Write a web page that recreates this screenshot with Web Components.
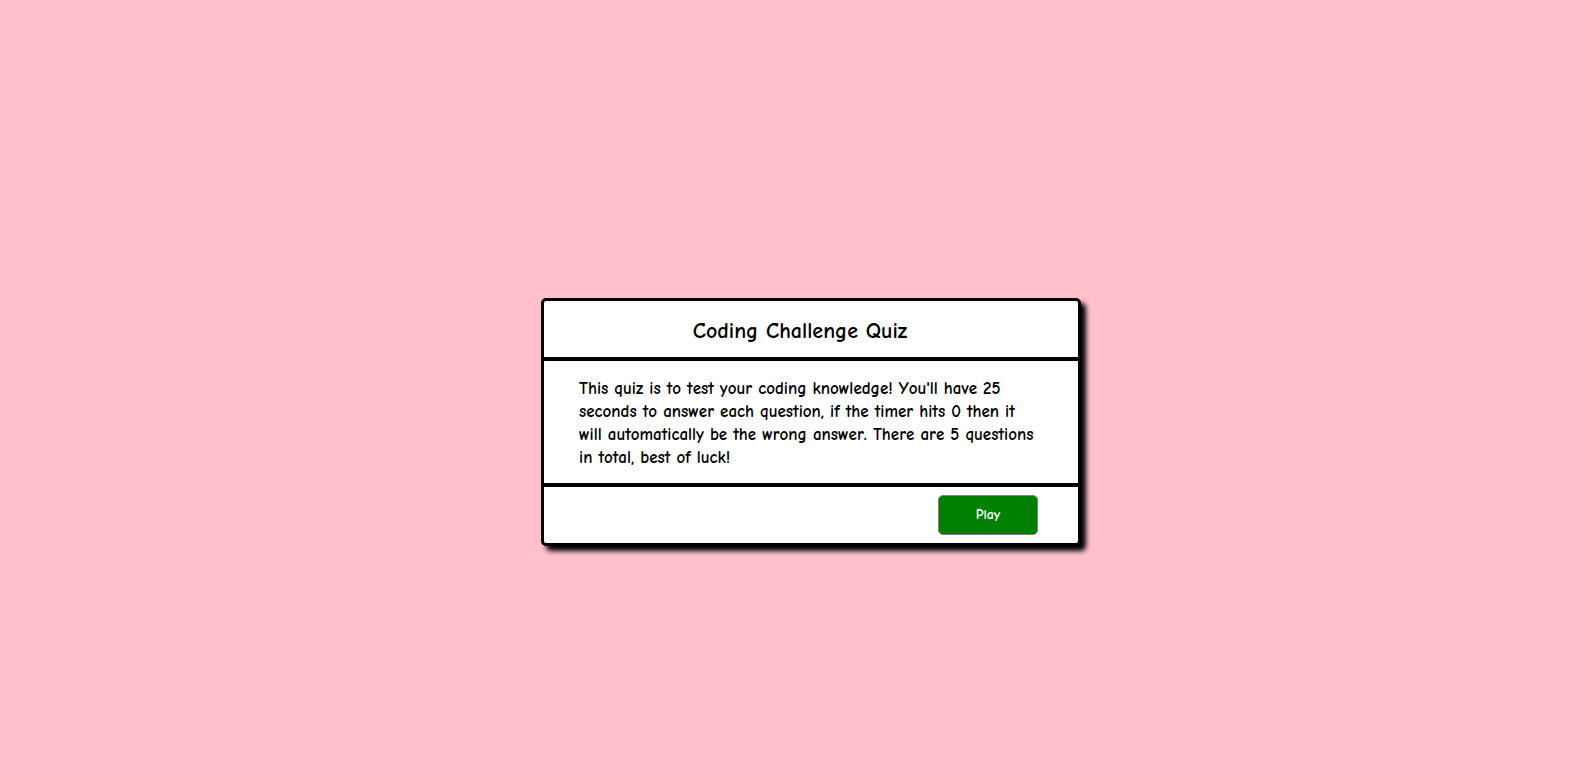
<!DOCTYPE html>
<html lang="en">
<head>
<meta charset="utf-8">
<meta name="viewport" content="width=device-width, initial-scale=1">
<title>Coding Challenge Quiz</title>
<style>
  body { margin: 0; background: pink; color: black; font-family: "Comic Sans MS", "Comic Neue", "Open Sans", cursive, sans-serif; font-kerning: none; }
</style>
</head>
<body>
<quiz-stage>
  <quiz-card>
    <h1 slot="title">Coding Challenge Quiz</h1>
    <p slot="intro">This quiz is to test your coding knowledge! You'll have 25 seconds to answer each question, if the timer hits 0 then it will automatically be the wrong answer. There are 5 questions in total, best of luck!</p>
    <quiz-button slot="action">Play</quiz-button>
  </quiz-card>
</quiz-stage>

<template id="stage-template">
  <style>
    :host { display: grid; place-items: center; box-sizing: border-box; min-height: 100vh; padding: 66px 0 0 40px; }
  </style>
  <slot></slot>
</template>

<template id="card-template">
  <style>
    :host { display: block; box-sizing: border-box; width: 100%; max-width: 540px; background: white; border: 3px solid black; border-radius: 5px; box-shadow: 5px 5px 5px black; }
    header { padding: 16px 22px 12px 0; border-bottom: 4px solid black; text-align: center; }
    ::slotted(h1) { margin: 0; font-size: 22px; line-height: 28px; font-weight: 700; }
    main { padding: 16px 35px 14px 35px; }
    ::slotted(p) { margin: 0; font-size: 17px; line-height: 23px; font-weight: 700; }
    footer { display: flex; justify-content: flex-end; padding: 8px 40px; border-top: 4px solid black; }
  </style>
  <header><slot name="title"></slot></header>
  <main><slot name="intro"></slot></main>
  <footer><slot name="action"></slot></footer>
</template>

<template id="button-template">
  <style>
    :host { display: block; }
    button { display: block; box-sizing: border-box; width: 100px; height: 40px; padding: 0; background: green; color: white; border: 1px solid gray; border-radius: 5px; font: 700 14px/18px "Comic Sans MS", "Comic Neue", "Open Sans", cursive, sans-serif; cursor: pointer; }
  </style>
  <button type="button"><slot></slot></button>
</template>

<script>
  class TemplateElement extends HTMLElement {
    constructor() {
      super();
      const template = document.getElementById(this.constructor.templateId);
      this.attachShadow({ mode: "open" }).append(template.content.cloneNode(true));
    }
  }
  class QuizStage extends TemplateElement { static templateId = "stage-template"; }
  class QuizCard extends TemplateElement { static templateId = "card-template"; }
  class QuizButton extends TemplateElement { static templateId = "button-template"; }
  customElements.define("quiz-stage", QuizStage);
  customElements.define("quiz-card", QuizCard);
  customElements.define("quiz-button", QuizButton);
</script>
</body>
</html>
